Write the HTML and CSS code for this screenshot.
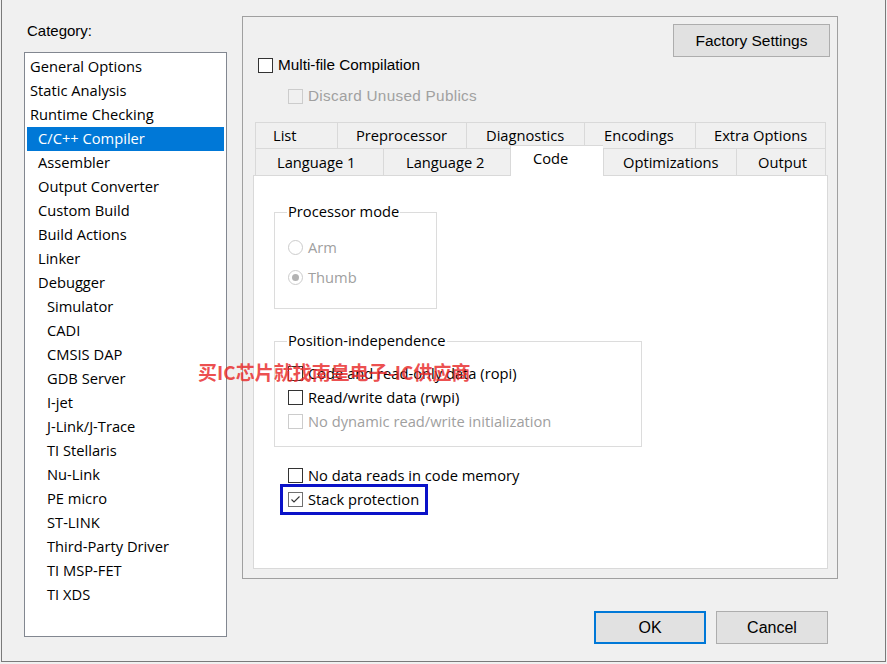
FILE: index.html
```html
<!DOCTYPE html>
<html>
<head>
<meta charset="utf-8">
<link rel="stylesheet" href="styles.css">
</head>
<body>
<div class="dialog">
  <div class="left">
    <div class="cat-label">Category:</div>
    <ul class="list">
      <li class="l0">General Options</li>
      <li class="l0">Static Analysis</li>
      <li class="l0">Runtime Checking</li>
      <li class="l1 sel">C/C++ Compiler</li>
      <li class="l1">Assembler</li>
      <li class="l1">Output Converter</li>
      <li class="l1">Custom Build</li>
      <li class="l1">Build Actions</li>
      <li class="l1">Linker</li>
      <li class="l1">Debugger</li>
      <li class="l2">Simulator</li>
      <li class="l2">CADI</li>
      <li class="l2">CMSIS DAP</li>
      <li class="l2">GDB Server</li>
      <li class="l2">I-jet</li>
      <li class="l2">J-Link/J-Trace</li>
      <li class="l2">TI Stellaris</li>
      <li class="l2">Nu-Link</li>
      <li class="l2">PE micro</li>
      <li class="l2">ST-LINK</li>
      <li class="l2">Third-Party Driver</li>
      <li class="l2">TI MSP-FET</li>
      <li class="l2">TI XDS</li>
    </ul>
  </div>
  <div class="right">
    <div class="group">
      <div class="top-row"><button class="btn factory">Factory Settings</button></div>
      <div class="chk-row legacy multi"><span class="cb"></span>Multi-file Compilation</div>
      <div class="chk-row legacy discard disabled"><span class="cb cb-dis cb-gray"></span>Discard Unused Publics</div>
      <div class="tabs">
        <div class="tab-row row1">
          <div class="tab t-list">List</div>
          <div class="tab t-pre">Preprocessor</div>
          <div class="tab t-diag">Diagnostics</div>
          <div class="tab t-enc">Encodings</div>
          <div class="tab t-extra last">Extra Options</div>
        </div>
        <div class="tab-row row2">
          <div class="tab t-lang1">Language 1</div>
          <div class="tab t-lang2">Language 2</div>
          <div class="tab t-code active">Code</div>
          <div class="tab t-opt">Optimizations</div>
          <div class="tab t-out last">Output</div>
        </div>
        <div class="panel">
          <div class="gbox proc">
            <div class="legend">Processor mode</div>
            <div class="chk-row disabled r-arm"><span class="radio"></span>Arm</div>
            <div class="chk-row disabled r-thumb"><span class="radio on"></span>Thumb</div>
          </div>
          <div class="gbox pos">
            <div class="legend">Position-independence</div>
            <div class="chk-row first"><span class="cb"></span>Code and read-only data (ropi)</div>
            <div class="chk-row next"><span class="cb"></span>Read/write data (rwpi)</div>
            <div class="chk-row next disabled"><span class="cb cb-dis"></span>No dynamic read/write initialization</div>
          </div>
          <div class="chk-row loose nodata"><span class="cb"></span>No data reads in code memory</div>
          <div class="chk-row loose next">
            <span class="hl"><span class="cb cb-checked"><svg width="13" height="13" viewBox="0 0 13 13"><path d="M2.5 6.5 L5 9 L10.5 3.5" fill="none" stroke="#333" stroke-width="1.1"/></svg></span>Stack protection</span>
          </div>
        </div>
      </div>
    </div>
    <div class="buttons">
      <button class="btn ok">OK</button>
      <button class="btn cancel">Cancel</button>
    </div>
  </div>
  <div class="watermark">买IC芯片就找南皇电子-IC供应商</div>
</div>
</body>
</html>
```
FILE: styles.css
```css
html, body {
  margin: 0;
  padding: 0;
  background: #f0f0f0;
}
body {
  font-family: "Open Sans", "Noto Sans", sans-serif;
  font-size: 14.7px;
  color: #000;
}
.dialog {
  position: relative;
  width: 885px;
  height: 662px;
  margin-left: 1px;
  box-sizing: border-box;
  border: 1px solid #7a7a7a;
  border-top: none;
  display: flex;
  padding-left: 22px;
  background: #f0f0f0;
}
.left {
  width: 203px;
  flex: none;
}
.cat-label {
  font-family: "Liberation Sans", Arial, sans-serif;
  font-size: 15px;
  line-height: 20px;
  margin-top: 21px;
  margin-left: 3px;
}
.list {
  margin: 11px 0 0;
  padding: 2px;
  list-style: none;
  height: 585px;
  box-sizing: border-box;
  border: 1px solid #828790;
  background: #fff;
}
.list li {
  height: 24px;
  line-height: 22px;
  white-space: nowrap;
}
.list .l0 { padding-left: 3px; }
.list .l1 { padding-left: 11px; }
.list .l2 { padding-left: 20px; }
.list .sel {
  background: #0078d7;
  color: #fff;
}
.right {
  margin-left: 15px;
  width: 596px;
  flex: none;
  padding-top: 16px;
}
.group {
  height: 563px;
  box-sizing: border-box;
  border: 1px solid #a0a0a0;
  padding: 7px 7px 0 0;
}
.top-row {
  display: flex;
  justify-content: flex-end;
}
.btn {
  background: #e1e1e1;
  border: 1px solid #adadad;
  font-family: "Liberation Sans", Arial, sans-serif;
  font-size: 15.5px;
  color: #000;
  padding: 0;
  margin: 0;
  box-sizing: border-box;
}
.factory {
  width: 157px;
  height: 33px;
}
.chk-row {
  display: flex;
  align-items: center;
  height: 20px;
  white-space: nowrap;
}
.legacy {
  height: 16px;
  font-family: "Liberation Sans", Arial, sans-serif;
  font-size: 15.3px;
}
.multi { margin-left: 15px; }
.discard { margin-left: 45px; margin-top: 15px; letter-spacing: 0.3px; }
.disabled { color: #a0a0a0; }
.cb {
  width: 15px;
  height: 15px;
  box-sizing: border-box;
  border: 1px solid #333;
  background: #fff;
  margin-right: 5px;
  flex: none;
  display: flex;
  align-items: center;
  justify-content: center;
}
.cb-dis { border-color: #cccccc; }
.cb-gray { background: #f0f0f0; }
.cb-checked { border-color: #707070; }
.cb svg { display: block; }
.radio {
  width: 15px;
  height: 15px;
  box-sizing: border-box;
  border: 1px solid #cccccc;
  border-radius: 50%;
  background: #fff;
  margin-right: 5px;
  flex: none;
  display: flex;
  align-items: center;
  justify-content: center;
}
.radio.on::after {
  content: "";
  width: 7px;
  height: 7px;
  border-radius: 50%;
  background: #b3b3b3;
}
.tabs {
  margin-top: 18px;
  margin-left: 10px;
  width: 575px;
}
.tab-row {
  display: flex;
  margin-left: 2px;
}
.tab {
  box-sizing: border-box;
  border-top: 1px solid #d9d9d9;
  border-left: 1px solid #d9d9d9;
  background: #f0f0f0;
  white-space: nowrap;
  flex: none;
}
.tab.last { border-right: 1px solid #d9d9d9; }
.row1 .tab { height: 26px; line-height: 25px; }
.row2 { height: 27px; align-items: flex-end; }
.row2 .tab { height: 27px; line-height: 26px; }
.t-list { width: 82px; padding-left: 17px; }
.t-pre { width: 129px; padding-left: 18px; }
.t-diag { width: 118px; padding-left: 19px; }
.t-enc { width: 111px; padding-left: 19px; }
.t-extra { width: 131px; padding-left: 18px; }
.t-lang1 { width: 128px; padding-left: 21px; }
.t-lang2 { width: 127px; padding-left: 22px; }
.t-code { width: 93px; padding-left: 22px; }
.t-opt { width: 133px; padding-left: 19px; }
.t-out { width: 90px; padding-left: 21px; }
.row2 .tab.active {
  height: 31px;
  line-height: 25px;
  margin-bottom: -1px;
  background: #fff;
  position: relative;
  z-index: 1;
}
.panel {
  height: 394px;
  box-sizing: border-box;
  border: 1px solid #d9d9d9;
  background: #fff;
  padding-left: 20px;
  padding-top: 36px;
}
.gbox {
  box-sizing: border-box;
  border: 1px solid #dcdcdc;
  padding-left: 13px;
}
.legend {
  width: fit-content;
  margin-top: -11px;
  margin-left: -1px;
  padding: 0 1px;
  line-height: 19px;
  height: 20px;
  background: #fff;
}
.proc {
  width: 163px;
  height: 97px;
}
.r-arm { margin-top: 15px; }
.r-thumb { margin-top: 10px; }
.pos {
  width: 368px;
  height: 106px;
  margin-top: 32px;
}
.first { margin-top: 12px; }
.next { margin-top: 4px; }
.loose { margin-left: 14px; }
.nodata { margin-top: 18px; }
.hl {
  display: flex;
  align-items: center;
  outline: 3px solid #0a12c8;
  padding: 2px 6px 3px 5px;
  margin: -2px 0 -3px -5px;
}
.buttons {
  display: flex;
  justify-content: flex-end;
  gap: 10px;
  padding-right: 10px;
  margin-top: 32px;
}
.ok, .cancel {
  width: 112px;
  height: 33px;
  font-size: 16px;
}
.ok {
  border-color: #0078d7;
  box-shadow: inset 0 0 0 1px #0078d7;
}
.watermark {
  position: absolute;
  left: 196px;
  top: 359px;
  font-family: "Noto Sans CJK SC", sans-serif;
  font-weight: bold;
  font-size: 19px;
  line-height: 26px;
  color: rgba(232, 40, 40, 0.82);
  white-space: nowrap;
}
```
